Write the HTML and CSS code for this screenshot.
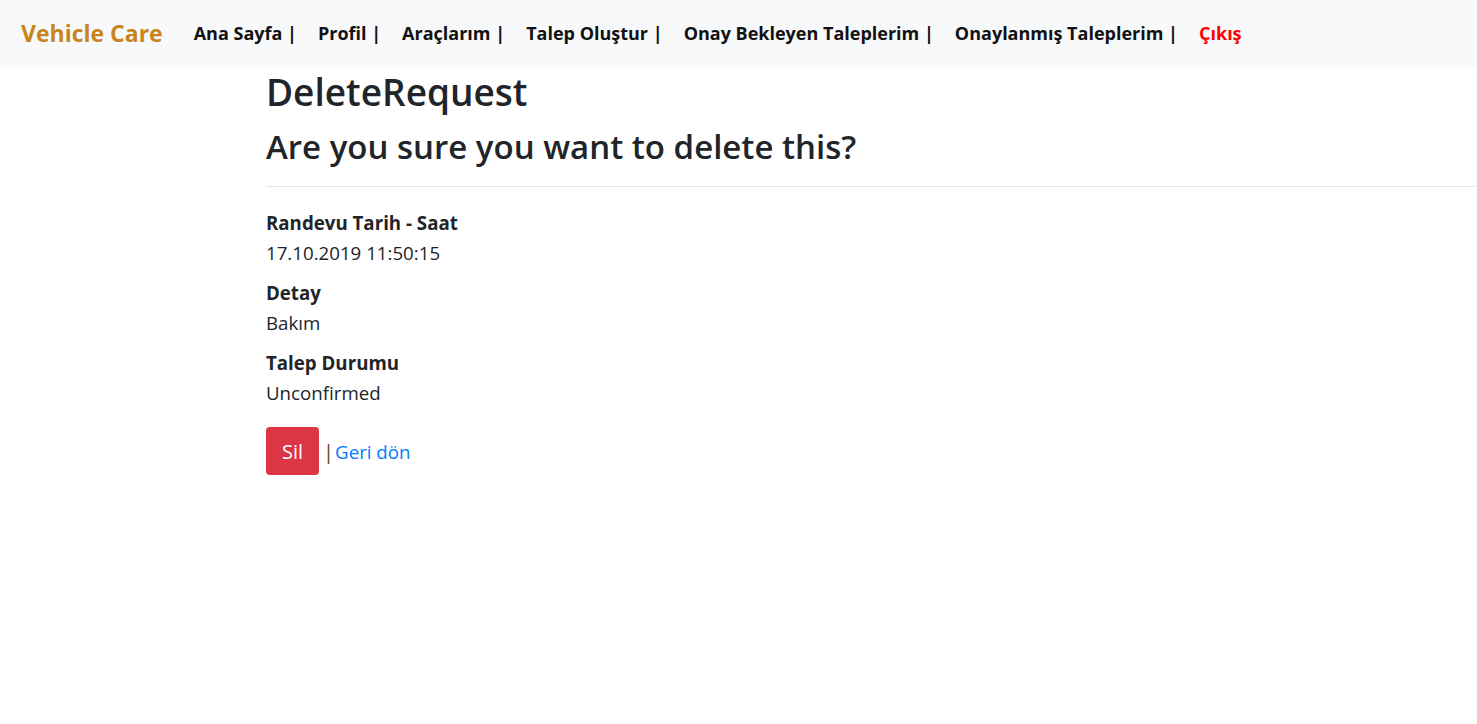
FILE: index.html
```html
<!DOCTYPE html>
<html lang="tr">
<head>
<meta charset="utf-8">
<title>DeleteRequest - Vehicle Care</title>
<link rel="stylesheet" href="styles.css">
</head>
<body>
<nav class="navbar">
  <a class="brand" href="#">Vehicle Care</a>
  <ul class="nav">
    <li><a class="nav-link" href="#">Ana Sayfa |</a></li>
    <li><a class="nav-link" href="#">Profil |</a></li>
    <li><a class="nav-link" href="#">Araçlarım |</a></li>
    <li><a class="nav-link" href="#">Talep Oluştur |</a></li>
    <li><a class="nav-link" href="#">Onay Bekleyen Taleplerim |</a></li>
    <li><a class="nav-link" href="#">Onaylanmış Taleplerim |</a></li>
    <li><a class="nav-link logout" href="#">Çıkış</a></li>
  </ul>
</nav>
<main class="content">
  <h1 class="title">DeleteRequest</h1>
  <h2 class="subtitle">Are you sure you want to delete this?</h2>
  <hr class="divider">
  <dl class="details">
    <dt>Randevu Tarih - Saat</dt>
    <dd>17.10.2019 11:50:15</dd>
    <dt>Detay</dt>
    <dd>Bakım</dd>
    <dt>Talep Durumu</dt>
    <dd>Unconfirmed</dd>
  </dl>
  <form class="actions">
    <button type="button" class="btn-danger">Sil</button>
    <span class="sep">|</span>
    <a class="back-link" href="#">Geri dön</a>
  </form>
</main>
</body>
</html>
```

FILE: styles.css
```css
html, body {
  margin: 0;
  padding: 0;
}
body {
  font-family: "Open Sans", "Noto Sans", sans-serif;
  color: #212529;
  background: #fff;
  font-size: 18.7px;
  overflow-x: hidden;
}
.navbar {
  display: flex;
  align-items: center;
  height: 67px;
  background: #f8f9fa;
  padding: 0 0 2px 21px;
  box-sizing: border-box;
}
.brand {
  color: #c8851c;
  font-weight: 700;
  font-size: 23px;
  text-decoration: none;
  margin-right: 31px;
}
.nav {
  display: flex;
  list-style: none;
  margin: 0;
  padding: 0;
  gap: 21px;
}
.nav-link {
  color: #111;
  font-weight: 700;
  font-size: 18px;
  text-decoration: none;
}
.nav-link.logout {
  color: #ff0000;
}
.content {
  padding-left: 266px;
}
.title {
  font-size: 37px;
  font-weight: 600;
  line-height: 48px;
  margin: 1px 0 0;
}
.subtitle {
  font-size: 33px;
  font-weight: 600;
  line-height: 38px;
  margin: 12px 0 0;
}
.divider {
  border: 0;
  border-top: 1px solid rgba(0,0,0,0.1);
  margin: 20px 0 0;
  width: calc(100vw - 266px);
}
.details {
  margin: 21px 0 0;
}
.details dt {
  font-weight: 700;
  line-height: 30px;
}
.details dd {
  margin: 0 0 10px;
  line-height: 30px;
}
.actions {
  display: flex;
  align-items: center;
  margin-top: 19px;
}
.btn-danger {
  background: #dc3545;
  color: #fff;
  border: 0;
  border-radius: 4px;
  height: 48px;
  padding: 0 16px;
  font-family: inherit;
  font-size: 20px;
}
.sep {
  color: #6b3f17;
  font-size: 20px;
  margin: 0 1px 0 4px;
}
.back-link {
  color: #007bff;
  font-size: 18.7px;
  text-decoration: none;
}
```
